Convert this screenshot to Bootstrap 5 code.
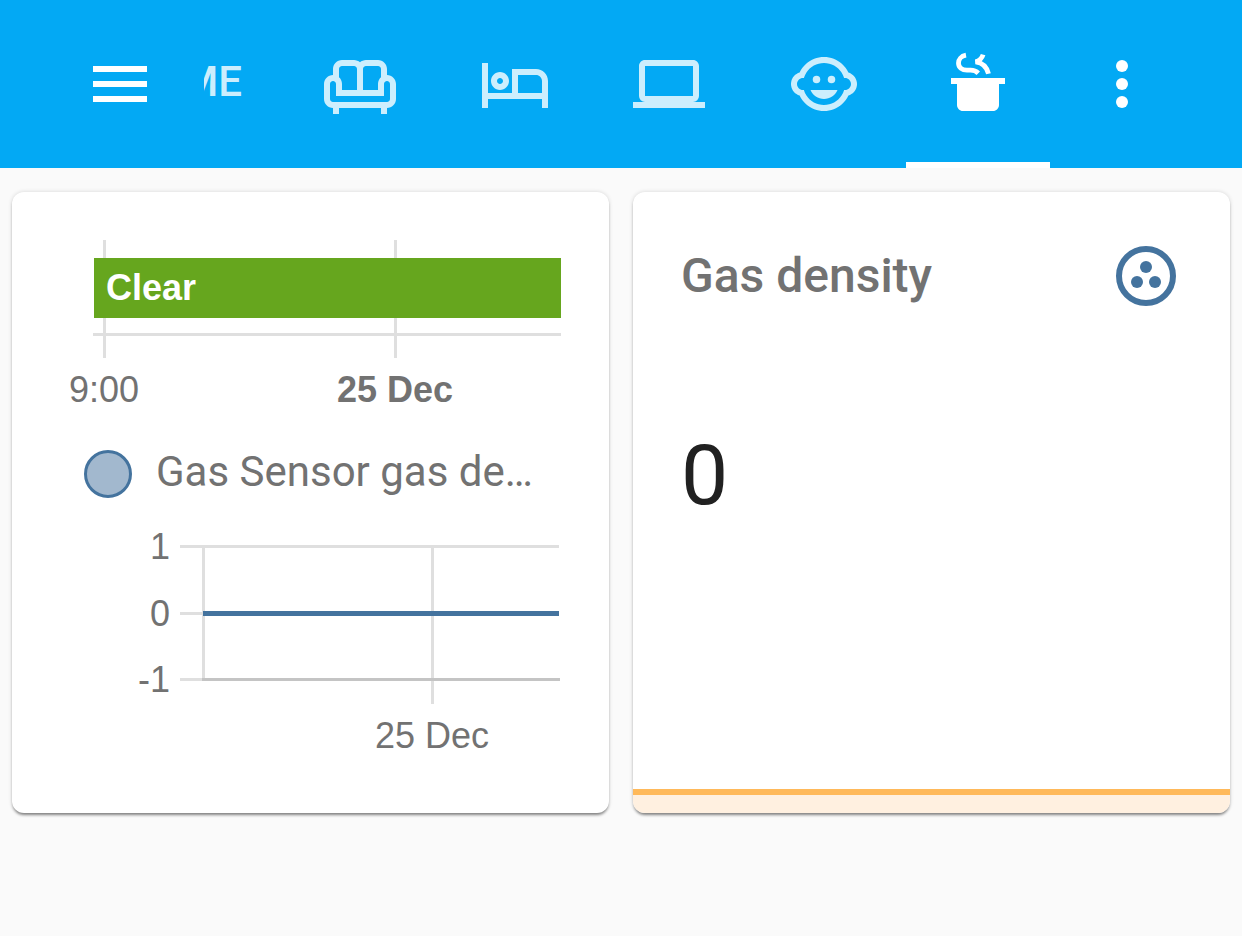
<!DOCTYPE html>
<html lang="en">
<head>
<meta charset="utf-8">
<meta name="viewport" content="width=device-width, initial-scale=1">
<title>Kitchen</title>
<link href="https://cdn.jsdelivr.net/npm/bootstrap@5.3.0/dist/css/bootstrap.min.css" rel="stylesheet">
<style>
  body { background: #fafafa; font-family: Roboto, sans-serif; color: #212121; }
  .app-bar { background: #03a9f4; height: 168px; padding: 0 60px; }
  .app-bar svg { width: 72px; height: 72px; fill: currentColor; display: block; }
  .bar-btn { width: 120px; height: 120px; padding: 24px; border: 0; background: none; color: #fff; }
  .tab-strip { margin: 0 12px 0 24px; min-width: 0; }
  .view-tab { width: 144px; color: #cceefd; border-bottom: 6px solid transparent; padding-top: 6px; }
  .view-tab.active { color: #fff; border-color: #fff; }
  .home-tab { width: 84px; padding: 0 46px 4px 0; font-size: 42px; font-weight: 500; line-height: 48px; color: #cceefd; }
  .cards { padding: 24px 0; }
  .panel { border: 0; border-radius: 12px; box-shadow: 0 3px 3px -1px rgba(0,0,0,.45), 0 0 4px rgba(0,0,0,.15); }
  .chart { display: block; width: 100%; height: auto; font: 36px "Liberation Sans", Arial, sans-serif; fill: #727272; }
  .grid-line { stroke: #dfdfdf; stroke-width: 3; }
  .zero-line { stroke: #c4c4c4; stroke-width: 3; }
  .legend-row { height: 80px; padding: 4px 72px 0; gap: 24px; font-size: 42px; color: #727272; border: 0; background: none; }
  .legend-text { line-height: 48px; padding-bottom: 4px; }
  .legend-dot { width: 48px; height: 48px; border: 3px solid #44739e; border-radius: 50%; background: #a2b8ce; }
  .sensor-head { padding: 48px 48px 0; }
  .sensor-name { font-size: 48px; line-height: 72px; font-weight: 500; color: #727272; }
  .sensor-value { font-size: 84px; line-height: 96px; padding: 0 48px; margin-top: 116px; }
  .spark { height: 24px; border-top: 6px solid #ffb95a; background: #fff0e0; }
</style>
</head>
<body>
<header class="app-bar d-flex align-items-center">
  <button class="bar-btn flex-shrink-0" type="button" aria-label="Menu"><svg viewBox="0 0 24 24"><path d="M3 6h18v2H3zM3 11h18v2H3zM3 16h18v2H3z"/></svg></button>
  <nav class="tab-strip d-flex flex-grow-1 h-100 overflow-hidden" aria-label="Views">
    <a href="#home" class="home-tab d-flex align-items-center justify-content-end flex-shrink-0 text-decoration-none">HOME</a>
    <div class="d-flex flex-grow-1 justify-content-between">
      <a href="#living" class="view-tab d-flex align-items-center justify-content-center" aria-label="Living room"><svg viewBox="0 0 24 24"><path d="M21 9V7C21 5.35 19.65 4 18 4H14C13.23 4 12.53 4.3 12 4.78C11.47 4.3 10.77 4 10 4H6C4.35 4 3 5.35 3 7V9C1.35 9 0 10.35 0 12V17C0 18.65 1.35 20 3 20V22H5V20H19V22H21V20C22.65 20 24 18.65 24 17V12C24 10.35 22.65 9 21 9M14 6H18C18.55 6 19 6.45 19 7V9.78C18.39 10.33 18 11.12 18 12V14H13V7C13 6.45 13.45 6 14 6M5 7C5 6.45 5.45 6 6 6H10C10.55 6 11 6.45 11 7V14H6V12C6 11.12 5.61 10.33 5 9.78V7M22 17C22 17.55 21.55 18 21 18H3C2.45 18 2 17.55 2 17V12C2 11.45 2.45 11 3 11S4 11.45 4 12V16H20V12C20 11.45 20.45 11 21 11S22 11.45 22 12V17Z"/></svg></a>
      <a href="#bedroom" class="view-tab d-flex align-items-center justify-content-center" aria-label="Bedroom"><svg viewBox="0 0 24 24"><path d="M7 14C8.66 14 10 12.66 10 11C10 9.34 8.66 8 7 8C5.34 8 4 9.34 4 11C4 12.66 5.34 14 7 14M7 10C7.55 10 8 10.45 8 11C8 11.55 7.55 12 7 12C6.45 12 6 11.55 6 11C6 10.45 6.45 10 7 10M19 7H11V15H3V5H1V20H3V17H21V20H23V11C23 8.79 21.21 7 19 7M21 15H13V9H19C20.1 9 21 9.9 21 11V15Z"/></svg></a>
      <a href="#office" class="view-tab d-flex align-items-center justify-content-center" aria-label="Office"><svg viewBox="0 0 24 24"><path d="M4,6H20V16H4M20,18A2,2 0 0,0 22,16V6C22,4.89 21.1,4 20,4H4C2.89,4 2,4.89 2,6V16A2,2 0 0,0 4,18H0V20H24V18H20Z"/></svg></a>
      <a href="#nursery" class="view-tab d-flex align-items-center justify-content-center" aria-label="Nursery"><svg viewBox="0 0 24 24"><circle cx="14.5" cy="10.5" r="1.25"/><circle cx="9.5" cy="10.5" r="1.25"/><path d="M22.94 12.66c.04-.21.06-.43.06-.66s-.02-.45-.06-.66c-.25-1.51-1.36-2.74-2.81-3.17-.53-1.12-1.28-2.1-2.19-2.91C16.36 3.85 14.28 3 12 3s-4.36.85-5.94 2.26c-.92.81-1.67 1.8-2.19 2.91-1.45.43-2.56 1.65-2.81 3.17-.04.21-.06.43-.06.66s.02.45.06.66c.25 1.51 1.36 2.74 2.81 3.17.52 1.11 1.27 2.09 2.17 2.89C7.62 20.14 9.71 21 12 21s4.38-.86 5.97-2.28c.9-.8 1.65-1.79 2.17-2.89 1.44-.43 2.55-1.65 2.8-3.17zM19 14c-.1 0-.19-.02-.29-.03-.2.67-.49 1.29-.86 1.86C16.6 17.74 14.45 19 12 19s-4.6-1.26-5.85-3.17c-.37-.57-.66-1.19-.86-1.86-.1.01-.19.03-.29.03-1.1 0-2-.9-2-2s.9-2 2-2c.1 0 .19.02.29.03.2-.67.49-1.29.86-1.86C7.4 6.26 9.55 5 12 5s4.6 1.26 5.85 3.17c.37.57.66 1.19.86 1.86.1-.01.19-.03.29-.03 1.1 0 2 .9 2 2s-.9 2-2 2zM7.5 14c.76 1.77 2.49 3 4.5 3s3.74-1.23 4.5-3h-9z"/></svg></a>
      <a href="#kitchen" class="view-tab active d-flex align-items-center justify-content-center" aria-label="Kitchen" aria-current="page"><svg viewBox="0 0 24 24"><path d="M19 19C19 20.11 18.11 21 17 21H7C5.9 21 5 20.11 5 19V12H3V10H21V12H19Z"/><path fill="none" stroke="currentColor" stroke-width="1.6" d="M8 2.400C6.300 2.700 5.500 3.900 5.500 5C5.500 6.600 6.800 7.400 8.300 7.400H9.500C10.700 7.400 11.400 7.700 12.100 8.400M13.700 2.200C13.300 3.500 12.600 4.200 11.200 4.600C13.400 4.900 15 6.300 15.500 8.600"/></svg></a>
    </div>
  </nav>
  <button class="bar-btn flex-shrink-0" type="button" aria-label="More options"><svg viewBox="0 0 24 24"><circle cx="12" cy="6" r="2"/><circle cx="12" cy="12" r="2"/><circle cx="12" cy="18" r="2"/></svg></button>
</header>

<main class="cards row gx-4 m-0">
  <div class="col-6">
    <section class="panel card h-100">
      <svg class="chart" viewBox="0 0 597 240" role="img" aria-label="Gas sensor state history">
        <path class="grid-line" d="M92.500 48V166M383.500 48V166M81 142.500H549"/>
        <rect x="82" y="66" width="467" height="60" fill="#66a61e"/>
        <text x="94" y="108" fill="#fff" font-weight="700">Clear</text>
        <text x="92" y="210" text-anchor="middle">9:00</text>
        <text x="383" y="210" text-anchor="middle" font-weight="700">25 Dec</text>
      </svg>
      <button type="button" class="legend-row d-flex align-items-center text-start">
        <span class="legend-dot flex-shrink-0"></span><span class="legend-text text-nowrap">Gas Sensor gas de…</span>
      </button>
      <svg class="chart" viewBox="0 0 597 301" role="img" aria-label="Gas density history">
        <path class="grid-line" d="M168 34.500H547M168 101.500H191M168 167.500H191M191.500 34V168M420.500 34V192"/>
        <path class="zero-line" d="M190 167.500H548"/>
        <path d="M191 101.500H547" stroke="#44739e" stroke-width="5"/>
        <g text-anchor="end">
          <text x="158" y="47">1</text>
          <text x="158" y="114">0</text>
          <text x="158" y="180">-1</text>
        </g>
        <text x="420" y="236" text-anchor="middle">25 Dec</text>
      </svg>
    </section>
  </div>
  <div class="col-6">
    <section class="panel card h-100 overflow-hidden">
      <div class="sensor-head d-flex justify-content-between align-items-center">
        <h2 class="sensor-name m-0">Gas density</h2>
        <svg width="72" height="72" viewBox="0 0 24 24" fill="#44739e"><circle cx="12" cy="12" r="9" fill="none" stroke="#44739e" stroke-width="2"/><circle cx="12" cy="9" r="2"/><circle cx="9" cy="14" r="2"/><circle cx="15" cy="14" r="2"/></svg>
      </div>
      <div class="sensor-value">0</div>
      <div class="spark mt-auto"></div>
    </section>
  </div>
</main>
<script src="https://cdn.jsdelivr.net/npm/bootstrap@5.3.0/dist/js/bootstrap.bundle.min.js"></script>
</body>
</html>
